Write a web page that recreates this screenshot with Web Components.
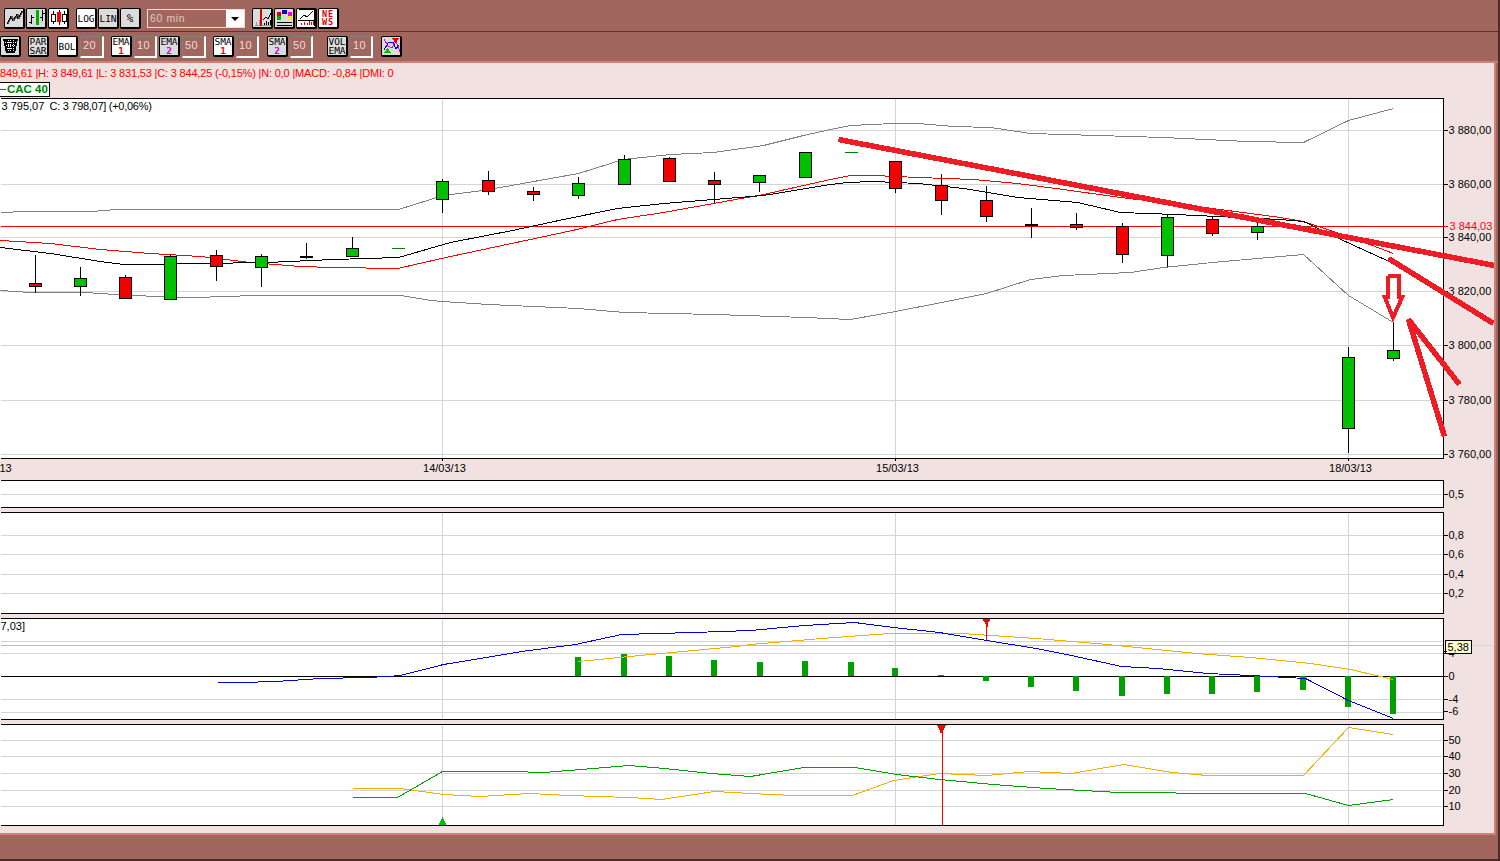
<!DOCTYPE html>
<html>
<head>
<meta charset="utf-8">
<title>CAC 40</title>
<style>
  html, body { margin: 0; padding: 0; overflow: hidden; background: #a1675f; }
  .m2 { margin-left: 2px; }
  .m6 { margin-left: 6px; }
  .m7 { margin-left: 7px; }
  .m8 { margin-left: 8px; }
  .m14 { margin-left: 14px; }
  chart-pane.sep { margin-top: 4px; }
</style>
</head>
<body>
<app-window>
  <tool-row slot="tools" first>
    <tool-btn style="margin-left:4px"><svg width="17" height="17" shape-rendering="crispEdges"><polyline points="1,15 5,7 7,12 11,5 12,10 16,2" fill="none" stroke="#000"/><polyline points="2,15 6,7 8,12 12,5 13,10 17,2" fill="none" stroke="#555"/></svg></tool-btn>
    <tool-btn><svg width="17" height="17" shape-rendering="crispEdges"><path d="M3.500 6v9M1 13h2.500M3.500 8H6M14.500 1v11M12 8h2.500M14.500 4H17" stroke="#000" fill="none"/><path d="M9 1v15" stroke="#00b000" stroke-width="3"/></svg></tool-btn>
    <tool-btn on><svg width="17" height="17" shape-rendering="crispEdges"><path d="M3.500 2v13M14.500 2v13" stroke="#000"/><rect x="1.500" y="5.500" width="4" height="7" fill="#fff" stroke="#000"/><rect x="12.500" y="5.500" width="4" height="7" fill="#fff" stroke="#000"/><path d="M9 1v15" stroke="#000"/><rect x="7" y="3" width="4" height="10" fill="#f00"/></svg></tool-btn>
    <tool-btn on class="m7">LOG</tool-btn>
    <tool-btn>LIN</tool-btn>
    <tool-btn><span style="font-size:11px">%</span></tool-btn>
    <period-select class="m6">60 min</period-select>
    <tool-btn class="m7"><svg width="17" height="17" shape-rendering="crispEdges"><path d="M1 16h16M2 16v-3M5 16v-5" stroke="#999" fill="none"/><path d="M7 0v17" stroke="#e00000" stroke-width="2"/><polyline points="9,11 12,8 14,10 17,4" fill="none" stroke="#000"/><path d="M10 16v-2M12 16v-4M14 16v-3M16 16v-5" stroke="#000"/></svg></tool-btn>
    <tool-btn><svg width="17" height="17" shape-rendering="crispEdges"><rect x="1" y="3" width="4" height="4" fill="#e00000"/><rect x="6" y="1" width="5" height="4" fill="#0000e0"/><rect x="12" y="3" width="4" height="4" fill="#f000f0"/><rect x="1" y="7" width="4" height="4" fill="#00b000"/><rect x="12" y="7" width="4" height="4" fill="#f0f000"/><path d="M1 13.500h15M1 16h15" stroke="#000"/></svg></tool-btn>
    <tool-btn on><svg width="17" height="17" shape-rendering="crispEdges"><path d="M0.500 0.500h16v16" fill="none" stroke="#000"/><polyline points="2,10 6,6 9,8 15,2" fill="none" stroke="#000"/><path d="M0 11.500h17" stroke="#000"/><path d="M3 16v-2M6 16v-3M9 16v-2M11 16v-4M13 16v-3M15 16v-4" stroke="#e00000"/></svg></tool-btn>
    <tool-btn on><news-mark>NE<br>WS</news-mark></tool-btn>
  </tool-row>
  <tool-row slot="tools">
    <tool-btn style="margin-left:0"><svg width="17" height="17" shape-rendering="crispEdges"><path d="M1 2h15l-3 14H4z" fill="#000"/><path d="M3 5h11M4 8h9M5 11h7M6 3v11M8.500 3v11M11 3v11" stroke="#fff" stroke-dasharray="1 1" fill="none"/></svg></tool-btn>
    <tool-btn class="m7">PAR<br>SAR</tool-btn>
    <tool-btn on class="m8">BOL</tool-btn>
    <num-field class="m2" w="24">20</num-field>
    <tool-btn on class="m7">EMA<br><b style="color:#f00">1</b></tool-btn>
    <num-field class="m2" w="23">10</num-field>
    <tool-btn class="m2">EMA<br><b style="color:#d000d0">2</b></tool-btn>
    <num-field class="m2" w="24">50</num-field>
    <tool-btn on class="m7">SMA<br><b style="color:#f00">1</b></tool-btn>
    <num-field class="m2" w="23">10</num-field>
    <tool-btn class="m8">SMA<br><b style="color:#d000d0">2</b></tool-btn>
    <num-field class="m2" w="23">50</num-field>
    <tool-btn class="m14">VOL<br>EMA</tool-btn>
    <num-field class="m2" w="23">10</num-field>
    <tool-btn class="m8"><svg width="17" height="17" shape-rendering="crispEdges"><polyline points="1,2 5,9 9,11 13,4 17,15" fill="none" stroke="#e000e0"/><polyline points="1,13 5,6 10,5 13,12 16,8" fill="none" stroke="#0000e0"/><path d="M9 1h7l-3.500 5z" fill="#e00000"/><path d="M1 16h7l-3.500-5z" fill="#00c000"/></svg></tool-btn>
  </tool-row>

  <quote-strip>
    <span slot="quote">849,61 |H: 3 849,61 |L: 3 831,53 |C: 3 844,25 (-0,15%) |N: 0,0 |MACD: -0,84 |DMI: 0</span>
    <span slot="name">CAC 40</span>
  </quote-strip>
  <chart-pane spec="price"></chart-pane>
  <chart-pane spec="volume"></chart-pane>
  <chart-pane spec="osc" class="sep"></chart-pane>
  <chart-pane spec="macd" class="sep"></chart-pane>
  <chart-pane spec="dmi" class="sep"></chart-pane>
</app-window>

<script>
class AppWindow extends HTMLElement {
  connectedCallback() {
    const shadow = this.attachShadow({ mode: 'open' });
    shadow.innerHTML = `
      <style>
        :host { display: flex; flex-direction: column; width: 1500px; height: 861px; box-sizing: border-box;
          background: #a1675f; border-right: 2px solid #4a2c28; font-family: "Liberation Sans", Arial, sans-serif; }
        .body { height: 770px; width: 1494px; box-sizing: border-box; background: #f1e1e1; overflow: hidden; }
        .edge { display: flex; flex-direction: column; height: 772px; width: 1496px; border-right: 2px solid #cf8076; box-sizing: border-box; border-bottom: 2px solid #cf8076; }
        .foot { flex: 1; border-bottom: 2px solid #4a2c28; }
      </style>
      <slot name="tools"></slot>
      <div class="edge"><div class="body"><slot></slot></div></div>
      <div class="foot"></div>`;
  }
}

class ToolRow extends HTMLElement {
  connectedCallback() {
    const first = this.hasAttribute('first');
    const shadow = this.attachShadow({ mode: 'open' });
    shadow.innerHTML = `
      <style>
        :host { display: flex; align-items: flex-start; box-sizing: border-box; overflow: hidden; }
        :host { height: ${first ? 32 : 31}px; padding-top: ${first ? 5 : 4}px; }
        :host { ${first
          ? 'border-top: 3px solid; border-image: linear-gradient(#a1675f 66%, #5a3630 66%) 3; border-bottom: 1px solid #cf8076;'
          : 'border-bottom: 2px solid; border-image: linear-gradient(#4a2c28 50%, #cf8076 50%) 2;'} }
      </style>
      <slot></slot>`;
  }
}

class ToolBtn extends HTMLElement {
  connectedCallback() {
    const on = this.hasAttribute('on');
    const shadow = this.attachShadow({ mode: 'open' });
    shadow.innerHTML = `
      <style>
        :host { display: flex; align-items: center; justify-content: center; flex: none; box-sizing: border-box;
          width: 21px; height: 21px; margin-left: 1px; text-align: center;
          border: 1px solid #000; border-width: 1px 2px 2px 1px; border-radius: 2px;
          background: ${on ? '#fff' : '#dcdcdc'};
          font: 9.500px/9px "DejaVu Sans Mono", monospace; color: #000; }
        .in { display: block; line-height: 9px; }
      </style>
      <div class="in"><slot></slot></div>`;
  }
}

class NewsMark extends HTMLElement {
  connectedCallback() {
    const shadow = this.attachShadow({ mode: 'open' });
    shadow.innerHTML = `
      <style>
        :host { display: block; font: bold 8.500px/8px "DejaVu Sans Mono", monospace; color: #e00000; letter-spacing: 1px; }
      </style>
      <slot></slot>`;
  }
}

class NumField extends HTMLElement {
  connectedCallback() {
    const shadow = this.attachShadow({ mode: 'open' });
    shadow.innerHTML = `
      <style>
        :host { display: block; flex: none; box-sizing: border-box; width: ${this.getAttribute('w')}px; height: 22px;
          padding-left: 2px; border: 1px solid; border-color: #808080 #fff #fff #808080; border-width: 1px 2px 2px 1px;
          background: #a1675f; color: #ecdcd8; font: 11px/17px "Liberation Sans", sans-serif; letter-spacing: 0.500px; }
      </style>
      <slot></slot>`;
  }
}

class PeriodSelect extends HTMLElement {
  connectedCallback() {
    const shadow = this.attachShadow({ mode: 'open' });
    shadow.innerHTML = `
      <style>
        :host { display: flex; flex: none; box-sizing: border-box; width: 98px; height: 19px; margin-top: 1px;
          border: 1px solid #e8dcdc; color: #e0c8c2; font: 10.500px/17px "Liberation Sans", sans-serif; letter-spacing: 0.600px; }
        .val { flex: 1; padding-left: 2px; }
        .arrow { width: 18px; background: #fff; display: flex; align-items: center; justify-content: center; }
        .arrow i { border: 4px solid transparent; border-top: 4px solid #000; border-bottom: 0; width: 0; height: 0; }
      </style>
      <div class="val"><slot></slot></div>
      <div class="arrow"><i></i></div>`;
  }
}

class QuoteStrip extends HTMLElement {
  connectedCallback() {
    const shadow = this.attachShadow({ mode: 'open' });
    shadow.innerHTML = `
      <style>
        :host { display: block; box-sizing: border-box; height: 35px; padding-top: 4px; font: 11px/13px "Liberation Sans", sans-serif; }
        .q { color: #f00; height: 15px; white-space: nowrap; letter-spacing: -0.180px; }
        .tag { display: flex; align-items: center; box-sizing: border-box; height: 15px; width: 50px; background: #fff; border: 1px solid #000; border-left: 0;
          color: #008000; font-weight: bold; font-size: 11.500px; }
        .tag i { display: block; width: 6px; height: 1px; background: #008000; margin-right: 1px; }
      </style>
      <div class="q"><slot name="quote"></slot></div>
      <div class="tag"><i></i><slot name="name"></slot></div>`;
  }
}

// ---- chart data, all in page pixels ----
const R = '#f40000', G = '#00c000', K = '#000';
// x, wick top, wick bottom, body top, body bottom, fill
const CANDLES = [
  [35, 255, 292, 283, 286, R], [80, 267, 295, 278, 286, G], [125, 275, 298, 277, 298, R],
  [170, 254, 299, 256, 299, G], [216, 250, 280, 255, 266, R], [261, 254, 286, 256, 267, G],
  [306, 243, 258, 256, 257, K], [352, 237, 256, 248, 256, G],
  [442, 179, 212, 181, 199, G], [488, 171, 194, 180, 191, R], [533, 187, 200, 191, 194, R],
  [578, 177, 198, 183, 195, G], [624, 155, 184, 159, 184, G], [669, 157, 181, 158, 181, R],
  [714, 172, 202, 180, 184, R], [759, 175, 191, 175, 182, G], [805, 152, 177, 152, 177, G],
  [895, 161, 192, 161, 188, R], [941, 174, 214, 185, 200, R], [986, 186, 221, 200, 216, R],
  [1031, 208, 237, 224, 225, K], [1076, 213, 229, 224, 227, R], [1122, 223, 262, 226, 254, R],
  [1167, 215, 266, 217, 255, G], [1212, 217, 235, 219, 233, R], [1257, 220, 239, 226, 232, G],
  [1348, 347, 452, 357, 428, G], [1393, 322, 360, 350, 358, G]
];
const DASHES = [[391, 404, 248], [844, 857, 152], [1297, 1308, 226]];
const BOLL_TOP = '0,212 12,212 13,211 92,211 115,209 398,209 430,199 442,195 483,190 578,173 623,159 670,154 713,152 763,145 803,135 830,129 850,125 893,123 917,123 953,126 990,127 1030,133 1097,135 1163,137 1247,141 1303,142 1348,120 1393,108';
const BOLL_LOW = '0,290 30,292 85,292 100,293 130,295 190,297 230,296 250,295 400,295 430,300 442,301 488,304 533,306 578,308 624,312 714,314 805,317 850,319 895,311 941,302 986,293 1030,279 1063,275 1130,272 1163,267 1212,262 1257,258 1303,254 1348,295 1393,322';
const EMA_RED = '0,240 50,243 100,249 150,253 200,256 250,262 300,266 333,267 397,268 450,256 572,230 617,219 663,212 713,203 763,194 830,179 850,175 873,175 918,177 973,179 1017,183 1063,189 1120,197 1197,206 1280,217 1303,221 1348,236 1393,253';
const SMA_BLACK = '0,247 50,253 100,261 123,264 147,264 200,263 267,262 333,259 398,257 450,242 512,230 563,219 617,208 663,203 713,199 763,195 830,184 847,182 873,181 918,183 963,188 1017,197 1077,202 1120,212 1175,214 1280,219 1303,221 1347,242 1393,263';
const MACD_BLUE = '217,682 241,682 275,681 320,678 366,677 387,676 400,675 443,664 486,657 521,651 575,644 621,634 693,632 750,630 804,625 854,622 893,627 939,632 986,640 1036,648 1071,655 1121,666 1157,668 1207,673 1250,675 1305,678 1348,700 1393,718';
const MACD_ORANGE = '578,661 629,656 682,651 736,646 750,644 821,638 889,633 961,633 1036,638 1107,644 1196,653 1250,657 1310,663 1350,669 1393,679';
const MACD_BARS = [[578, 657], [624, 654], [669, 656], [714, 660], [760, 662], [805, 661], [851, 662], [895, 668], [941, 675],
  [986, 681], [1031, 687], [1076, 691], [1122, 696], [1167, 694], [1212, 694], [1257, 692], [1303, 690], [1348, 707], [1393, 714]];
const DMI_GREEN = '352,797 397,797 442,771 511,771 543,772 568,770 593,768 629,765 664,768 711,773 750,776 804,767 854,767 896,774 939,779 993,784 1046,788 1118,792 1232,793 1305,793 1348,805 1393,799';
const DMI_ORANGE = '352,788 400,788 443,794 479,796 529,793 568,795 629,797 661,799 714,791 750,793 793,795 852,795 893,780 939,773 986,775 1029,771 1071,773 1123,764 1171,772 1207,775 1303,775 1348,727 1393,734';

const PLOT_R = 1443;
const GRID = '#d4d4d4';
const hline = (y, x1, x2, c) => `<rect x="${x1}" y="${y - 0.5}" width="${x2 - x1}" height="1" fill="${c}"/>`;
const vline = (x, y1, y2, c) => `<rect x="${x - 0.5}" y="${y1 - 0.5}" width="1" height="${y2 - y1}" fill="${c}"/>`;
const line = (pts, c, w = 1) => `<polyline points="${pts}" fill="none" stroke="${c}" stroke-width="${w}"/>`;
const label = (x, y, t, c = K, extra = '') => `<text x="${x}" y="${y}" fill="${c}" ${extra}>${t}</text>`;
const frame = (y1, y2) => `<rect x="-0.500" y="${y1 - 0.5}" width="${PLOT_R + 0.5}" height="${y2 - y1 + 1}" fill="#fff"/>`;
const border = (y1, y2) => hline(y1, 0, PLOT_R, K) + hline(y2, 0, PLOT_R, K) + vline(PLOT_R, y1, y2 + 1, K);
const yAxis = ticks => ticks.map(([y, t]) => hline(y, PLOT_R, PLOT_R + 4, K) + label(1448, y + 3, t)).join('');

const candle = ([x, wt, wb, bt, bb, fill]) => vline(x, wt, wb + 1, K) +
  `<rect x="${x - 6}" y="${bt}" width="12" height="${bb - bt}" fill="${fill}" stroke="#000"/>`;

const SPECS = {
  price: { top: 98, height: 382, draw() {
    const gy = [130, 184, 237, 291, 345, 400, 454];
    const vals = ['3 880,00', '3 860,00', '3 840,00', '3 820,00', '3 800,00', '3 780,00', '3 760,00'];
    return frame(98, 458) +
      gy.map(y => hline(y, 0, PLOT_R, GRID)).join('') +
      [442, 895, 1348].map(x => vline(x, 99, 458, GRID)).join('') +
      line(BOLL_TOP, '#808080') + line(BOLL_LOW, '#808080') +
      hline(226, 0, 1447, '#f00') +
      line(EMA_RED, '#f00') + line(SMA_BLACK, K) +
      CANDLES.map(candle).join('') +
      DASHES.map(([a, b, y]) => hline(y, a, b, '#008000')).join('') +
      border(98, 458) +
      yAxis(gy.map((y, i) => [y, vals[i]])) +
      label(1449, 229, '3 844,03', '#f00') +
      label(1, 109, '3 795,07') +
      label(49, 109, 'C: 3 798,07] (+0,06%)', K, 'letter-spacing="-0.28"') +
      label(-1, 471, '13') +
      [[442, '14/03/13'], [895, '15/03/13'], [1348, '18/03/13']].map(([x, t]) =>
        vline(x, 459, 461, K) + `<text x="${x + 2}" y="471" text-anchor="middle">${t}</text>`).join('') +
      line('838,139 1494,265', '#ee1c24', 5.5) +
      line('1388,258 1493,323', '#ee1c24', 5.5) +
      line('1459,384 1408,319 1444,436', '#ee1c24', 5.5) +
      line('1387,275 1398,275 1398,296 1402,296 1392.500,317 1384,296 1387,296 1387,275', '#ee1c24', 4);
  } },
  volume: { top: 480, height: 28, draw() {
    return frame(480, 507) + hline(494, 0, PLOT_R, GRID) + border(480, 507) + yAxis([[494, '0,5']]);
  } },
  osc: { top: 512, height: 102, draw() {
    const t = [[535, '0,8'], [554, '0,6'], [574, '0,4'], [593, '0,2']];
    return frame(512, 613) + t.map(([y]) => hline(y, 0, PLOT_R, GRID)).join('') +
      [442, 895, 1348].map(x => vline(x, 513, 613, GRID)).join('') + border(512, 613) + yAxis(t);
  } },
  macd: { top: 618, height: 102, draw() {
    const t = [[653, '4'], [676, '0'], [699, '-4'], [711, '-6']];
    return frame(618, 719) +
      [641, 653, 699, 712].map(y => hline(y, 0, PLOT_R, GRID)).join('') +
      hline(645, 0, PLOT_R, '#bcbcbc') + hline(645, PLOT_R, 1492, GRID) +
      [442, 895, 1348].map(x => vline(x, 619, 719, GRID)).join('') +
      hline(676, 0, PLOT_R, K) +
      MACD_BARS.map(([x, y]) => `<rect x="${x - 3.5}" y="${Math.min(y, 676) - 0.5}" width="6" height="${Math.abs(y - 676)}" fill="#00a000"/>`).join('') +
      line(MACD_ORANGE, '#f0b000') + line(MACD_BLUE, '#0000d8') +
      vline(986, 619, 640, '#f00') + `<path d="M982 618.500h8l-3 5v3h-2v-3z" fill="#f00"/>` +
      border(618, 719) + yAxis(t) + label(0, 629, '7,03]') +
      `<rect x="1444.500" y="639.500" width="26" height="13" fill="#ffffcc" stroke="#000"/>` +
      hline(651, PLOT_R, 1446, K) + label(1447, 650, '5,38');
  } },
  dmi: { top: 724, height: 102, draw() {
    const t = [[740, '50'], [756, '40'], [773, '30'], [790, '20'], [806, '10']];
    return frame(724, 825) + t.map(([y]) => hline(y, 0, PLOT_R, GRID)).join('') +
      [442, 895, 1348].map(x => vline(x, 725, 825, GRID)).join('') +
      line(DMI_ORANGE, '#f0b000') + line(DMI_GREEN, '#00a000') +
      `<path d="M442 816.500l4.500 8.500h-9z" fill="#00c000"/>` +
      border(724, 825) + yAxis(t) +
      `<rect x="941" y="724" width="1" height="100" fill="#ff0000"/>` +
      `<path d="M936.500 724.500h9l-3 6v2h-3v-2z" fill="#f00"/>`;
  } }
};

class ChartPane extends HTMLElement {
  connectedCallback() {
    const { top, height, draw } = SPECS[this.getAttribute('spec')];
    const shadow = this.attachShadow({ mode: 'open' });
    shadow.innerHTML = `
      <style>
        :host { display: block; height: ${height}px; }
        svg { display: block; overflow: visible; shape-rendering: crispEdges; font: 11px "Liberation Sans", sans-serif; }
      </style>
      <svg width="1494" height="${height}" viewBox="0 ${top} 1494 ${height}"><g transform="translate(0.500 0.500)">${draw()}</g></svg>`;
  }
}

customElements.define('app-window', AppWindow);
customElements.define('tool-row', ToolRow);
customElements.define('tool-btn', ToolBtn);
customElements.define('news-mark', NewsMark);
customElements.define('num-field', NumField);
customElements.define('period-select', PeriodSelect);
customElements.define('quote-strip', QuoteStrip);
customElements.define('chart-pane', ChartPane);
</script>
</body>
</html>
